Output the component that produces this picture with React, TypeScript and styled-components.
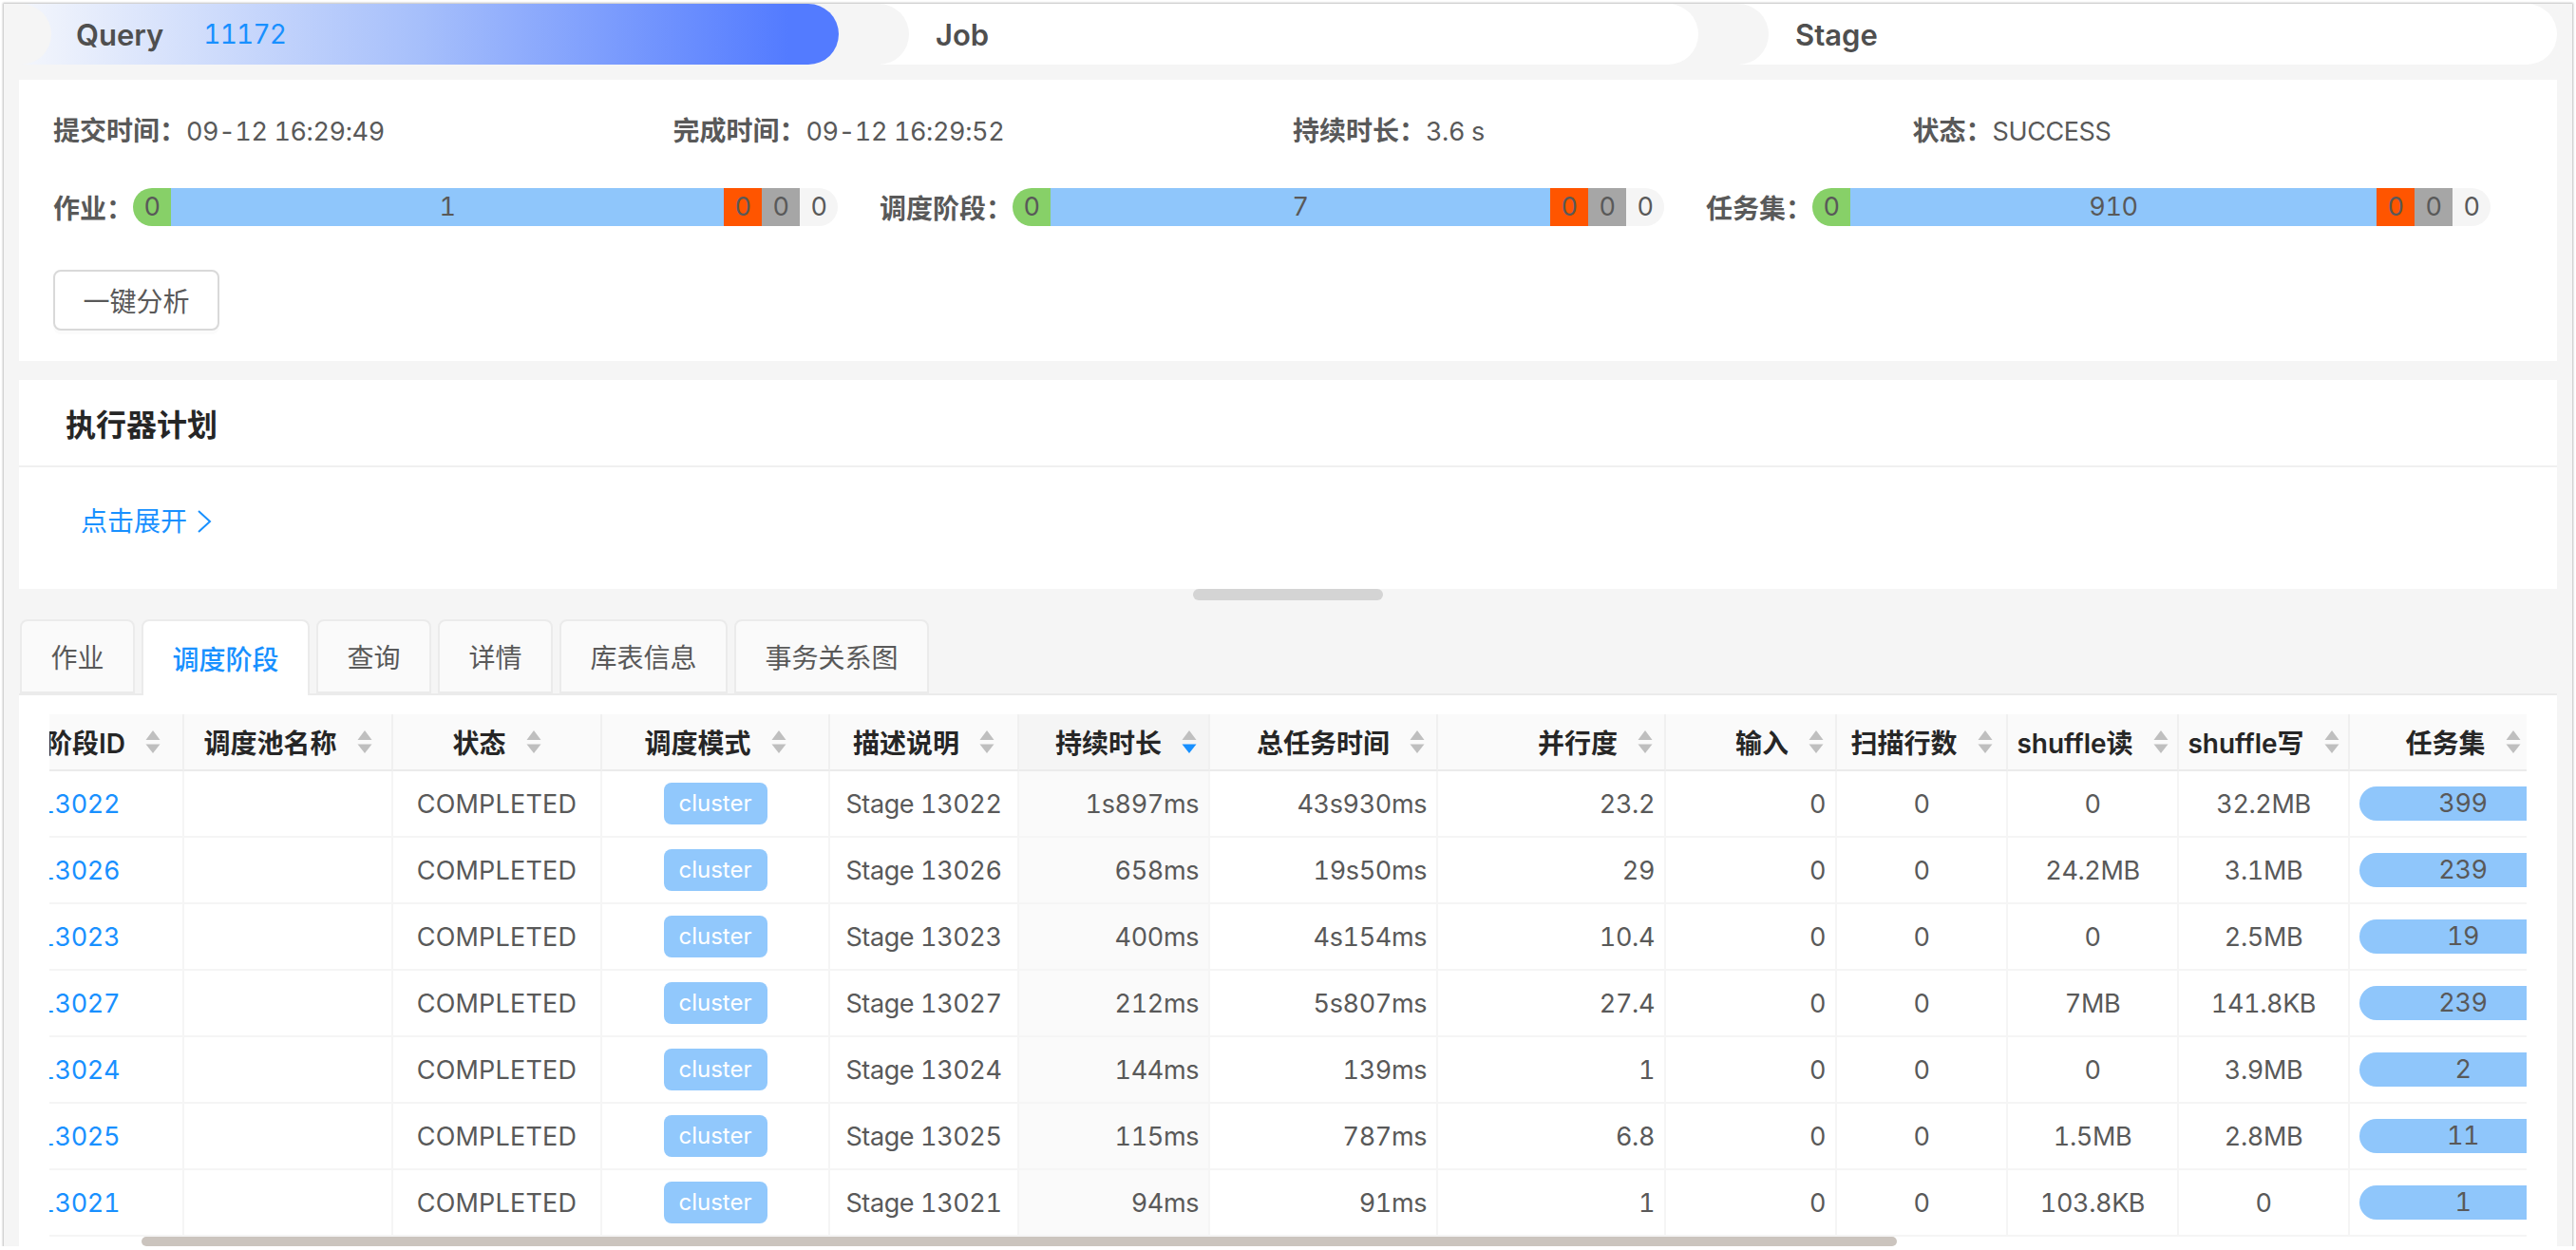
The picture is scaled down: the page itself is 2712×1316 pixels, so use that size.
import React from "react";
import styled, { createGlobalStyle } from "styled-components";

const Global = createGlobalStyle`
  html, body { margin: 0; padding: 0; background: #fff; }
  body {
    font-family: Inter, "Noto Sans CJK SC", sans-serif;
    font-size: 27px;
    font-variant-numeric: tabular-nums;
    letter-spacing: -0.4px;
    color: #595959;
  }
  * { box-sizing: border-box; }
`;

const Frame = styled.div`
  width: 2704px;
  height: 1308px;
  margin: 4px 0 0 4px;
  background: #f5f5f5;
  box-shadow: 0 0 2px 1px #bdbdbd;
  overflow: hidden;
  position: relative;
`;

const Steps = styled.div`
  display: flex;
  height: 64px;
  background: #fff;
  position: relative;
`;

const Step = styled.div<{ $active?: boolean; $first?: boolean; $z: number; $w: number }>`
  width: ${(p) => p.$w}px;
  flex: none;
  height: 64px;
  position: relative;
  z-index: ${(p) => p.$z};
  display: flex;
  align-items: center;
  gap: 42px;
  padding-left: ${(p) => (p.$first ? 76 : 102)}px;
  border-radius: 0 32px 32px 0;
  background: ${(p) => (p.$active ? "linear-gradient(90deg, #f2f5fc 3%, #a6bffb 50%, #537bff 94%)" : "#fff")};
  box-shadow: 74px 0 0 0 #f5f5f5;
  ${(p) =>
    p.$first
      ? `&::before { content: ""; position: absolute; left: 0; top: 0; width: 50px; height: 64px; background: #f5f5f5; border-radius: 0 32px 32px 0; }`
      : ""}
`;

const StepName = styled.span`
  font-weight: 600;
  font-size: 31px;
  letter-spacing: 0;
  color: #4f4f4f;
  position: relative;
`;

const StepValue = styled.span`
  color: #1890ff;
  font-size: 28px;
  letter-spacing: -0.8px;
`;

const StepFill = styled.div`
  flex: 1;
  background: #f5f5f5;
`;

const Summary = styled.section`
  margin: 16px 16px 0;
  height: 296px;
  background: #fff;
  padding: 32px 26px 0 36px;
`;

const InfoRow = styled.div`
  display: grid;
  grid-template-columns: repeat(4, 1fr);
  height: 40px;
  align-items: center;
`;

const Label = styled.span`
  font-weight: 600;
  font-size: 28px;
  letter-spacing: 0;
`;

const BarRow = styled.div`
  display: grid;
  grid-template-columns: repeat(3, 1fr);
  margin-top: 42px;
`;

const BarGroup = styled.div`
  display: flex;
  align-items: center;
  padding-right: 44px;
`;

const Bar = styled.div`
  flex: 1;
  display: flex;
  height: 40px;
  border-radius: 20px;
  overflow: hidden;
`;

const Segment = styled.div<{ $bg: string; $grow?: boolean }>`
  flex: ${(p) => (p.$grow ? "1" : "none")};
  width: ${(p) => (p.$grow ? "auto" : "40px")};
  background: ${(p) => p.$bg};
  text-align: center;
  line-height: 40px;
`;

const AnalyzeButton = styled.button`
  display: block;
  margin-top: 46px;
  width: 175px;
  height: 64px;
  background: #fff;
  border: 2px solid #d9d9d9;
  border-radius: 8px;
  box-shadow: 0 4px 0 rgba(0, 0, 0, 0.015);
  font: inherit;
  font-size: 28px;
  letter-spacing: 0;
  color: #595959;
  padding: 0;
`;

const PlanCard = styled.section`
  margin: 20px 16px 0;
  height: 220px;
  background: #fff;
`;

const PlanHeader = styled.header`
  height: 92px;
  border-bottom: 2px solid #f0f0f0;
  padding-left: 49px;
  display: flex;
  align-items: center;
  font-size: 32px;
  font-weight: 700;
  letter-spacing: 0;
  color: #262626;
`;

const ExpandLink = styled.a`
  display: flex;
  align-items: center;
  gap: 10px;
  margin: 37px 0 0 65px;
  color: #1890ff;
  font-size: 28px;
  letter-spacing: 0;
  line-height: 40px;
`;

const Handle = styled.div`
  position: absolute;
  left: 1252px;
  top: 616px;
  width: 200px;
  height: 12px;
  border-radius: 6px;
  background: #d4d4d4;
`;

const TabBar = styled.div`
  margin: 32px 16px 0;
  height: 80px;
  border-bottom: 2px solid #ebebeb;
  display: flex;
  gap: 7px;
  padding-left: 1px;
`;

const Tab = styled.div<{ $active?: boolean }>`
  height: ${(p) => (p.$active ? 80 : 78)}px;
  padding: 0 30.5px;
  display: flex;
  align-items: center;
  border: 2px solid #ebebeb;
  border-bottom: ${(p) => (p.$active ? "none" : "2px solid #ebebeb")};
  border-radius: 8px 8px 0 0;
  background: ${(p) => (p.$active ? "#fff" : "#fafafa")};
  color: ${(p) => (p.$active ? "#1890ff" : "#595959")};
  font-weight: ${(p) => (p.$active ? 500 : 400)};
  font-size: 28px;
  letter-spacing: 0;
  position: relative;
`;

const TablePanel = styled.section`
  margin: 0 16px;
  background: #fff;
  padding: 20px 32px 0;
  height: 580px;
`;

const Clip = styled.div`
  overflow: hidden;
  width: 2608px;
`;

const Table = styled.table`
  table-layout: fixed;
  border-collapse: separate;
  border-spacing: 0;
  width: 2740px;
  margin-left: -78px;
`;

const Th = styled.th<{ $sorted?: boolean; $pr?: number }>`
  height: 60px;
  padding: 0 ${(p) => p.$pr ?? 12}px 0 0;
  background: ${(p) => (p.$sorted ? "#f5f5f5" : "#fafafa")};
  border-right: 2px solid #f0f0f0;
  border-bottom: 2px solid #ebebeb;
  font-weight: 600;
  color: #262626;
  font-size: 28px;
  letter-spacing: 0;
`;

const ThInner = styled.div<{ $align: "center" | "end" }>`
  display: flex;
  align-items: center;
  gap: 21px;
  justify-content: ${(p) => (p.$align === "end" ? "flex-end" : "center")};
  padding-left: ${(p) => (p.$align === "end" ? 0 : 12)}px;
  white-space: nowrap;
`;

const SortBox = styled.svg`
  width: 16px;
  height: 24px;
  flex: none;
`;

const Td = styled.td<{ $align: string; $sorted?: boolean; $pr?: number }>`
  height: 70px;
  padding: 0 ${(p) => p.$pr ?? 10}px 0 10px;
  text-align: ${(p) => p.$align};
  background: ${(p) => (p.$sorted ? "#fafafa" : "#fff")};
  border-right: 2px solid #f5f5f5;
  border-bottom: 2px solid #f5f5f5;
  color: #595959;
  white-space: nowrap;
`;

const IdLink = styled.a`
  color: #1890ff;
`;

const StatusText = styled.span`
  letter-spacing: 0.2px;
`;

const ClusterTag = styled.span`
  display: inline-block;
  width: 109px;
  height: 44px;
  line-height: 44px;
  text-align: center;
  background: #91c8fc;
  color: #fff;
  border-radius: 8px;
  font-size: 24px;
  letter-spacing: 0;
  vertical-align: middle;
`;

const TaskBar = styled.div`
  height: 36px;
  line-height: 36px;
  border-radius: 18px;
  background: #8fc6fb;
  text-align: center;
`;

const Track = styled.div`
  height: 10px;
  padding-left: 97px;
`;

const Thumb = styled.div`
  width: 1848px;
  height: 10px;
  background: #cbc4be;
  border-radius: 5px;
`;

const Sorter = ({ active }: { active?: boolean }) => (
  <SortBox viewBox="0 0 16 24">
    <path d="M8 0 L15.5 10 L0.5 10 Z" fill="#bfbfbf" />
    <path d="M8 24 L15.5 14.5 L0.5 14.5 Z" fill={active ? "#1890ff" : "#bfbfbf"} />
  </SortBox>
);

type Col = { title: string; width: number; head: "center" | "end"; pr?: number };

const cols: Col[] = [
  { title: "阶段ID", width: 220, head: "end", pr: 23 },
  { title: "调度池名称", width: 220, head: "center" },
  { title: "状态", width: 220, head: "center" },
  { title: "调度模式", width: 240, head: "center" },
  { title: "描述说明", width: 199, head: "center" },
  { title: "持续时长", width: 201, head: "end" },
  { title: "总任务时间", width: 240, head: "end" },
  { title: "并行度", width: 240, head: "end" },
  { title: "输入", width: 180, head: "end" },
  { title: "扫描行数", width: 180, head: "center" },
  { title: "shuffle读", width: 180, head: "center" },
  { title: "shuffle写", width: 180, head: "center" },
  { title: "任务集", width: 240, head: "center" },
];

const rows = [
  ["13022", "1s897ms", "43s930ms", "23.2", "0", "0", "0", "32.2MB", "399"],
  ["13026", "658ms", "19s50ms", "29", "0", "0", "24.2MB", "3.1MB", "239"],
  ["13023", "400ms", "4s154ms", "10.4", "0", "0", "0", "2.5MB", "19"],
  ["13027", "212ms", "5s807ms", "27.4", "0", "0", "7MB", "141.8KB", "239"],
  ["13024", "144ms", "139ms", "1", "0", "0", "0", "3.9MB", "2"],
  ["13025", "115ms", "787ms", "6.8", "0", "0", "1.5MB", "2.8MB", "11"],
  ["13021", "94ms", "91ms", "1", "0", "0", "103.8KB", "0", "1"],
];

const Progress = ({ label, done }: { label: string; done: string }) => (
  <BarGroup>
    <Label>{label}</Label>
    <Bar>
      <Segment $bg="#87d068">0</Segment>
      <Segment $bg="#8fc6fb" $grow>{done}</Segment>
      <Segment $bg="#ff5500">0</Segment>
      <Segment $bg="#a6a6a6">0</Segment>
      <Segment $bg="#f5f5f5">0</Segment>
    </Bar>
  </BarGroup>
);

const tabs = ["作业", "调度阶段", "查询", "详情", "库表信息", "事务关系图"];

export default function App() {
  return (
    <Frame>
      <Global />
      <Steps>
        <Step $active $first $z={3} $w={879}>
          <StepName>Query</StepName>
          <StepValue>11172</StepValue>
        </Step>
        <Step $z={2} $w={905}>
          <StepName>Job</StepName>
        </Step>
        <Step $z={1} $w={904}>
          <StepName>Stage</StepName>
        </Step>
        <StepFill />
      </Steps>
      <Summary>
        <InfoRow>
          <span><Label>提交时间：</Label>09-12 16:29:49</span>
          <span><Label>完成时间：</Label>09-12 16:29:52</span>
          <span><Label>持续时长：</Label>3.6 s</span>
          <span><Label>状态：</Label>SUCCESS</span>
        </InfoRow>
        <BarRow>
          <Progress label="作业：" done="1" />
          <Progress label="调度阶段：" done="7" />
          <Progress label="任务集：" done="910" />
        </BarRow>
        <AnalyzeButton>一键分析</AnalyzeButton>
      </Summary>
      <PlanCard>
        <PlanHeader>执行器计划</PlanHeader>
        <ExpandLink>
          点击展开
          <svg width="16" height="24" viewBox="0 0 16 24" fill="none">
            <path d="M2 1 L14 12 L2 23" stroke="#1890ff" strokeWidth="2" />
          </svg>
        </ExpandLink>
      </PlanCard>
      <Handle />
      <TabBar>
        {tabs.map((t) => (
          <Tab key={t} $active={t === "调度阶段"}>{t}</Tab>
        ))}
      </TabBar>
      <TablePanel>
        <Clip>
          <Table>
            <colgroup>
              {cols.map((c) => (
                <col key={c.title} width={c.width} />
              ))}
            </colgroup>
            <thead>
              <tr>
                {cols.map((c) => (
                  <Th key={c.title} $sorted={c.title === "持续时长"} $pr={c.pr}>
                    <ThInner $align={c.head}>
                      {c.title}
                      <Sorter active={c.title === "持续时长"} />
                    </ThInner>
                  </Th>
                ))}
              </tr>
            </thead>
            <tbody>
              {rows.map((r) => (
                <tr key={r[0]}>
                  <Td $align="right" $pr={66}><IdLink>{r[0]}</IdLink></Td>
                  <Td $align="center" />
                  <Td $align="center"><StatusText>COMPLETED</StatusText></Td>
                  <Td $align="center"><ClusterTag>cluster</ClusterTag></Td>
                  <Td $align="center">Stage {r[0]}</Td>
                  <Td $align="right" $sorted>{r[1]}</Td>
                  <Td $align="right">{r[2]}</Td>
                  <Td $align="right">{r[3]}</Td>
                  <Td $align="right">{r[4]}</Td>
                  <Td $align="center">{r[5]}</Td>
                  <Td $align="center">{r[6]}</Td>
                  <Td $align="center">{r[7]}</Td>
                  <Td $align="center"><TaskBar>{r[8]}</TaskBar></Td>
                </tr>
              ))}
            </tbody>
          </Table>
        </Clip>
        <Track><Thumb /></Track>
      </TablePanel>
    </Frame>
  );
}
